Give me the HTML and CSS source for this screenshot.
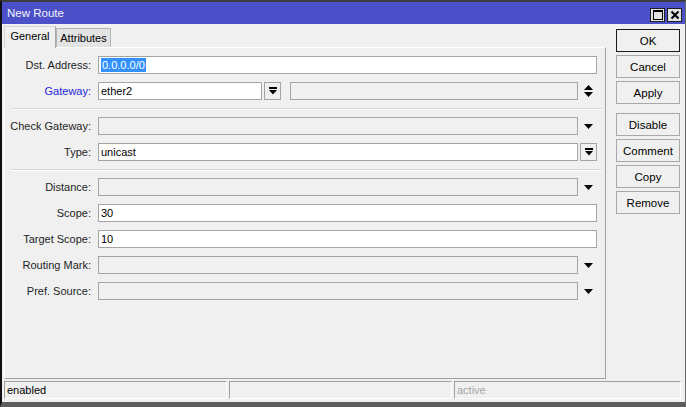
FILE: index.html
```html
<!DOCTYPE html>
<html>
<head>
<meta charset="utf-8">
<title>New Route</title>
<link rel="stylesheet" href="styles.css">
</head>
<body>
<div class="window">
  <div class="titlebar">
    <span class="title">New Route</span>
    <div class="tbtns">
      <div class="tbtn"><svg width="12" height="12" viewBox="0 0 12 12"><rect x="1.5" y="1.5" width="9" height="9" fill="none" stroke="#000" stroke-width="1"/><rect x="1" y="1" width="10" height="2" fill="#000"/></svg></div>
      <div class="tbtn"><svg width="12" height="12" viewBox="0 0 12 12"><path d="M2.5 2.5L9.5 9.5M9.5 2.5L2.5 9.5" stroke="#000" stroke-width="2"/></svg></div>
    </div>
  </div>
  <div class="main">
    <div class="left">
      <div class="tabs">
        <div class="tab active">General</div>
        <div class="tab">Attributes</div>
      </div>
      <div class="panel">
        <div class="row">
          <label class="lbl">Dst. Address:</label>
          <div class="field white wide"><span class="sel">0.0.0.0/0</span></div>
        </div>
        <div class="row">
          <label class="lbl blue">Gateway:</label>
          <div class="field white gw">ether2</div>
          <div class="dbtn"><svg width="8" height="8" viewBox="0 0 8 8"><rect x="0" y="0" width="8" height="2" fill="#000"/><path d="M0 3H8L4 7.5Z" fill="#000"/></svg></div>
          <div class="field gray gw2"></div>
          <div class="arrow"><svg width="9" height="12" viewBox="0 0 9 12"><path d="M4.5 0L9 5H0Z M0 7H9L4.5 12Z" fill="#000"/></svg></div>
        </div>
        <div class="sep"></div>
        <div class="row">
          <label class="lbl">Check Gateway:</label>
          <div class="field gray mid"></div>
          <div class="arrow"><svg width="9" height="5" viewBox="0 0 9 5"><path d="M0 0H9L4.5 5Z" fill="#000"/></svg></div>
        </div>
        <div class="row">
          <label class="lbl">Type:</label>
          <div class="field white mid">unicast</div>
          <div class="dbtn tb"><svg width="8" height="8" viewBox="0 0 8 8"><rect x="0" y="0" width="8" height="2" fill="#000"/><path d="M0 3H8L4 7.5Z" fill="#000"/></svg></div>
        </div>
        <div class="sep"></div>
        <div class="row">
          <label class="lbl">Distance:</label>
          <div class="field gray mid"></div>
          <div class="arrow"><svg width="9" height="5" viewBox="0 0 9 5"><path d="M0 0H9L4.5 5Z" fill="#000"/></svg></div>
        </div>
        <div class="row">
          <label class="lbl">Scope:</label>
          <div class="field white wide">30</div>
        </div>
        <div class="row">
          <label class="lbl">Target Scope:</label>
          <div class="field white wide">10</div>
        </div>
        <div class="row">
          <label class="lbl">Routing Mark:</label>
          <div class="field gray mid"></div>
          <div class="arrow"><svg width="9" height="5" viewBox="0 0 9 5"><path d="M0 0H9L4.5 5Z" fill="#000"/></svg></div>
        </div>
        <div class="row">
          <label class="lbl">Pref. Source:</label>
          <div class="field gray mid"></div>
          <div class="arrow"><svg width="9" height="5" viewBox="0 0 9 5"><path d="M0 0H9L4.5 5Z" fill="#000"/></svg></div>
        </div>
      </div>
    </div>
    <div class="side">
      <div class="btn default">OK</div>
      <div class="btn">Cancel</div>
      <div class="btn">Apply</div>
      <div class="btn group">Disable</div>
      <div class="btn">Comment</div>
      <div class="btn">Copy</div>
      <div class="btn">Remove</div>
    </div>
  </div>
  <div class="status">
    <div class="seg s1">enabled</div>
    <div class="seg s2"></div>
    <div class="seg s3 dim">active</div>
  </div>
</div>
</body>
</html>
```
FILE: styles.css
```css
* { box-sizing: border-box; }
html, body { margin: 0; padding: 0; }
body {
  width: 686px;
  height: 407px;
  overflow: hidden;
  font-family: "Liberation Sans", Arial, sans-serif;
  font-size: 11px;
  color: #000;
  background: #5c5c5c;
}
.window {
  width: 686px;
  height: 407px;
  display: flex;
  flex-direction: column;
  background: #f0f0f0;
  border-top: 2px solid #3c3c3c;
  border-left: 2px solid #111;
  border-right: 1px solid #6a6a6a;
  border-bottom: 5px solid #5c5c5c;
}
.titlebar {
  height: 22px;
  flex: none;
  background: #4b50c8;
  display: flex;
  align-items: center;
  justify-content: space-between;
  padding: 0 3px 0 5px;
}
.title {
  color: #f4f4ff;
  font-size: 11.5px;
}
.tbtns {
  display: flex;
  gap: 2px;
  margin-top: 3px;
}
.tbtn {
  width: 15px;
  height: 14px;
  background: #e2e2e2;
  border: 1px solid #202020;
  display: flex;
  align-items: center;
  justify-content: center;
}
.main {
  height: 357px;
  flex: none;
  display: flex;
}
.left {
  width: 604px;
  padding: 2px 0 0 2px;
}
.tabs {
  height: 21px;
  display: flex;
  align-items: flex-end;
  position: relative;
  z-index: 1;
}
.tab {
  height: 19px;
  padding: 0 5px;
  background: #e3e3e3;
  border: 1px solid #b4b4b4;
  border-bottom: none;
  display: flex;
  align-items: center;
  width: 55px;
  justify-content: center;
}
.tab.active {
  height: 22px;
  width: 52px;
  background: #f0f0f0;
  border-color: #d6d6d6;
  border-right-color: #a8a8a8;
  margin-bottom: -1px;
  padding-bottom: 3px;
}
.panel {
  height: 332px;
  width: 602px;
  border-top: 1px solid #ffffff;
  border-left: 1px solid #ffffff;
  border-right: 1px solid #a0a0a0;
  border-bottom: 1px solid #a0a0a0;
  padding: 8px 8px 0 0;
}
.row {
  height: 18px;
  display: flex;
  align-items: stretch;
  margin-bottom: 8px;
}
.lbl {
  width: 86px;
  margin-right: 7px;
  text-align: right;
  line-height: 18px;
  color: #1e1e1e;
  white-space: nowrap;
}
.lbl.blue { color: #2525dc; }
.field {
  border: 1px solid #a4a4a4;
  line-height: 16px;
  padding-left: 2px;
  white-space: nowrap;
  overflow: hidden;
}
.field.white { background: #ffffff; }
.field.gray { background: #f0f0f0; }
.wide { width: 499px; }
.mid { width: 480px; }
.gw { width: 164px; }
.gw2 { width: 288px; margin-left: 9px; }
.sel {
  display: inline-block;
  background: #3390ff;
  color: #ffffff;
  line-height: 14px;
  margin-top: 1px;
  padding: 0 1px;
}
.dbtn {
  width: 17px;
  margin-left: 2px;
  border: 1px solid #a4a4a4;
  background: #f0f0f0;
  display: flex;
  align-items: center;
  justify-content: center;
}
.arrow {
  width: 19px;
  display: flex;
  align-items: center;
  justify-content: center;
  padding-left: 2px;
}
.sep {
  height: 2px;
  margin: 0 0 7px 7px;
  width: 590px;
  border-top: 1px solid #d8d8d8;
  border-bottom: 1px solid #ffffff;
}
.side {
  width: 79px;
  padding: 5px 0 0 10px;
  display: flex;
  flex-direction: column;
  gap: 3px;
}
.btn {
  width: 64px;
  height: 23px;
  border: 1px solid #a8a8a8;
  background: #f0f0f0;
  display: flex;
  align-items: center;
  justify-content: center;
  font-size: 11.5px;
}
.btn.default { border: 1px solid #1a1a1a; }
.btn.group { margin-top: 6px; }
.status {
  height: 18px;
  flex: none;
  display: flex;
  gap: 2px;
  padding: 0 4px 0 2px;
  margin-bottom: 3px;
}
.seg {
  height: 18px;
  border-top: 1px solid #a0a0a0;
  border-left: 1px solid #a0a0a0;
  border-right: 1px solid #ffffff;
  border-bottom: 1px solid #ffffff;
  line-height: 17px;
  padding-left: 2px;
}
.s1, .s2 { width: 223px; }
.s3 { flex: 1; }
.dim { color: #a6a6a6; }
```
